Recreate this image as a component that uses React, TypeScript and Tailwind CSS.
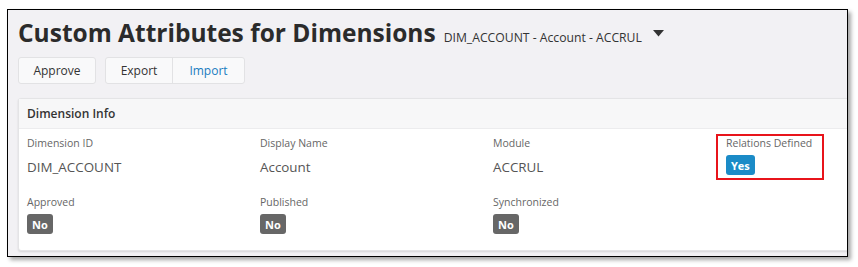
const Badge = ({ yes }: { yes?: boolean }) => (
  <span
    className={`flex h-[20px] items-center rounded-[3px] px-[5px] text-[11px] font-bold leading-none text-white ${
      yes ? 'bg-[#1b8bc7]' : 'bg-[#676767]'
    }`}
  >
    {yes ? 'Yes' : 'No'}
  </span>
)

const Field = ({ label, value }: { label: string; value: string }) => (
  <div>
    <p className="text-[10.5px] leading-[14px] text-[#666]">{label}</p>
    <p className="mt-[8px] text-[13.4px] leading-[18px] text-[#555]">{value}</p>
  </div>
)

const Flag = ({ label, yes }: { label: string; yes?: boolean }) => (
  <div>
    <p className="text-[10.5px] leading-[14px] text-[#666]">{label}</p>
    <div className="mt-[5px] flex">
      <Badge yes={yes} />
    </div>
  </div>
)

export default function App() {
  return (
    <div className="h-[267px] w-[858px] bg-white pl-[7px] pt-[9px] font-['Open_Sans',sans-serif]">
      <div className="h-[248px] w-[841px] overflow-hidden border border-black bg-[#f2f1f4] pl-[10px] pt-[8px] shadow-[3px_3px_4px_rgba(0,0,0,0.35)]">
        <div className="flex items-baseline">
          <h1 className="text-[24.5px] font-bold leading-[30px] text-[#2b2b2b]">Custom Attributes for Dimensions</h1>
          <span className="ml-[8px] text-[12.2px] text-[#333]">DIM_ACCOUNT - Account - ACCRUL</span>
          <svg className="ml-[11px] self-center" width="11" height="7" viewBox="0 0 11 7">
            <path d="M0 0h11L5.5 6.5z" fill="#333" />
          </svg>
        </div>

        <div className="mt-[9px] flex gap-[9px] text-[12px]">
          <button className="h-[27px] w-[78px] rounded-[3px] border border-[#e2e2e4] bg-[#f9f9fa] text-[#333]">Approve</button>
          <div className="flex rounded-[3px] border border-[#e2e2e4] bg-[#f9f9fa]">
            <button className="h-[25px] w-[67px] border-r border-[#e2e2e4] text-[#333]">Export</button>
            <button className="h-[25px] w-[71px] text-[#1a7cc0]">Import</button>
          </div>
        </div>

        <div className="mt-[14px] w-[840px] rounded-[3px] border border-[#e4e4e6] bg-white shadow-[0_1px_2px_rgba(0,0,0,0.12)]">
          <div className="h-[30px] border-b border-[#ececee] bg-[#f7f7f8] pl-[8px] text-[12px] font-semibold leading-[29px] text-[#333]">
            Dimension Info
          </div>
          <div className="grid grid-cols-[233px_233px_233px_1fr] gap-y-[19px] pb-[16px] pl-[8px] pt-[7px]">
            <Field label="Dimension ID" value="DIM_ACCOUNT" />
            <Field label="Display Name" value="Account" />
            <Field label="Module" value="ACCRUL" />
            <div className="relative">
              <div className="pointer-events-none absolute left-[-10px] top-[-2px] h-[46px] w-[108px] border-2 border-[#e8141b]" />
              <Flag label="Relations Defined" yes />
            </div>
            <Flag label="Approved" />
            <Flag label="Published" />
            <Flag label="Synchronized" />
          </div>
        </div>
      </div>
    </div>
  )
}
